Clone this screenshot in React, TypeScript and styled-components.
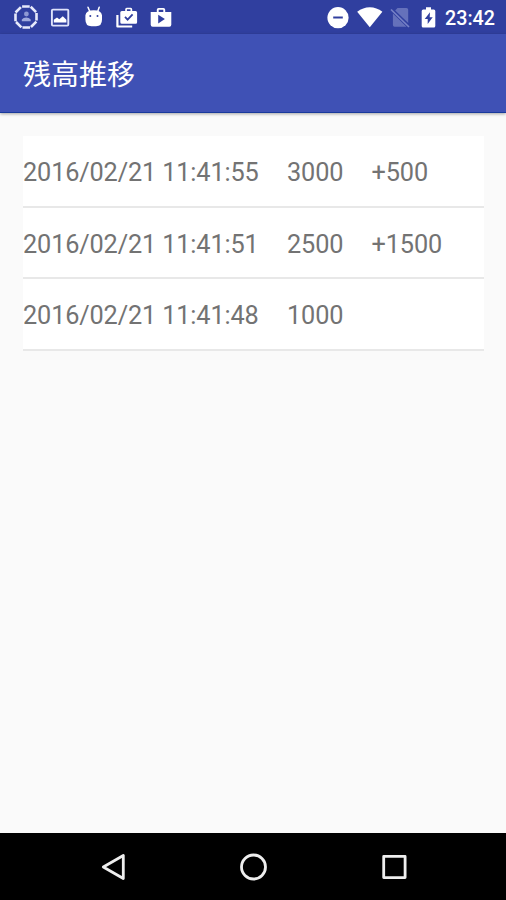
import React from 'react';
import styled, { createGlobalStyle } from 'styled-components';

const GlobalStyle = createGlobalStyle`
  * { box-sizing: border-box; }
  html, body { margin: 0; padding: 0; }
  body { background: #fafafa; font-family: Roboto, "Noto Sans CJK JP", sans-serif; }
`;

const Screen = styled.div`
  display: flex;
  flex-direction: column;
  width: 506px;
  height: 900px;
  overflow: hidden;
  background: #fafafa;
`;

const StatusBar = styled.header`
  display: flex;
  justify-content: space-between;
  align-items: center;
  flex: 0 0 34px;
  padding: 0 10px 0 14px;
  background: #303f9f;
`;

const IconGroup = styled.div<{ $gap: number }>`
  display: flex;
  align-items: center;
  gap: ${({ $gap }) => $gap}px;
`;

const StatusIcon = styled.svg<{ $width?: number }>`
  display: block;
  width: ${({ $width = 24 }) => $width}px;
  height: 24px;
  fill: #fff;
`;

const Clock = styled.time`
  width: 51px;
  margin-left: 3px;
  padding-top: 3px;
  color: #fff;
  font-size: 19.7px;
  font-weight: 500;
  line-height: 24px;
  white-space: nowrap;
`;

const AppBar = styled.div`
  display: flex;
  align-items: center;
  flex: 0 0 79px;
  padding: 0 23px 1px;
  background: #3f51b5;
  border-bottom: 1px solid #193a9c;
  box-shadow: 0 1px 3px rgba(0, 0, 0, 0.35);
  z-index: 1;
`;

const Title = styled.h1`
  margin: 0;
  color: #fff;
  font-family: "Noto Sans CJK JP", sans-serif;
  font-size: 28px;
  font-weight: 400;
  line-height: 40px;
`;

const Content = styled.main`
  flex: 1;
  padding: 23px 22px 0 23px;
`;

const History = styled.ul`
  margin: 0;
  padding: 0;
  list-style: none;
`;

const Row = styled.li`
  display: grid;
  grid-template-columns: 264px 84.5px 1fr;
  align-items: center;
  height: 71.7px;
  background: #fff;
  border-bottom: 2px solid #e8e8e8;
  color: #737373;
  font-size: 25.3px;
  line-height: 30px;
  white-space: nowrap;
`;

const Cell = styled.span<{ $tracking?: number }>`
  padding-top: 4px;
  letter-spacing: ${({ $tracking = -0.1 }) => $tracking}px;
`;

const NavigationBar = styled.nav`
  display: flex;
  justify-content: center;
  align-items: center;
  gap: 108.5px;
  flex: 0 0 67px;
  background: #000;
`;

const NavButton = styled.button`
  display: block;
  width: 32px;
  height: 32px;
  padding: 0;
  border: 0;
  background: none;

  svg {
    display: block;
    fill: none;
    stroke: #eee;
    stroke-width: 2.8;
    stroke-linejoin: round;
  }
`;

const entries = [
  { date: '2016/02/21 11:41:55', balance: '3000', change: '+500' },
  { date: '2016/02/21 11:41:51', balance: '2500', change: '+1500' },
  { date: '2016/02/21 11:41:48', balance: '1000', change: '' },
];

const Notifications = () => (
  <IconGroup $gap={9.75}>
    <StatusIcon viewBox="0 0 24 24">
      <path d="M7.5 1.5h9l6 6v9l-6 6h-9l-6-6v-9z" fill="none" stroke="#e6e9fb" strokeWidth="2.6" strokeLinejoin="round" strokeDasharray="7.6 1.1" strokeDashoffset="-0.6" />
      <circle cx="12.4" cy="9" r="2.4" fill="#8e99d3" />
      <path d="M7.8 16.3v-1.7q1.6-2 4.4-2t4.5 2v1.7z" fill="#a0aadd" />
    </StatusIcon>
    <StatusIcon viewBox="0 0 24 24">
      <rect x="3.9" y="4.6" width="16.4" height="16" rx="1" fill="none" stroke="#dfe3fb" strokeWidth="1.9" />
      <path d="M5.8 17.6v-2.8l3.2-2.2 2.3 1.7 3.5-3 3.6 3.5v2.8z" />
    </StatusIcon>
    <StatusIcon viewBox="0 0 24 24">
      <path d="m6 2.3 1.8 4.2M17.2 2.3l-1.5 4.2" stroke="#fff" strokeWidth="1.5" strokeLinecap="round" />
      <path fillRule="evenodd" d="M3.4 10.3Q4.2 5.3 11.7 5.3t8.3 5v4.2q0 6.8-6 6.8H9.4q-6 0-6-6.8zM8.3 10a1 1 0 1 0 0 2 1 1 0 0 0 0-2m7.2 0a1 1 0 1 0 0 2 1 1 0 0 0 0-2" />
    </StatusIcon>
    <StatusIcon viewBox="0 0 24 24">
      <path d="M2.4 10v11.5h14.8" fill="none" stroke="#fff" strokeWidth="2.2" strokeLinejoin="round" />
      <path fillRule="evenodd" d="M5.3 7.5Q5.3 6 6.8 6h3.4V4.2q0-1.5 1.5-1.5h4q1.5 0 1.5 1.5V6h3.4q1.5 0 1.5 1.5v9.7q0 1.5-1.5 1.5H6.8q-1.5 0-1.5-1.5zM11.9 4.3V6h3.6V4.3z" />
      <path d="m10 11.8 2.6 2.8 5-5.3" fill="none" stroke="#303f9f" strokeWidth="1.8" />
    </StatusIcon>
    <StatusIcon viewBox="0 0 24 24">
      <path fillRule="evenodd" d="M1.7 7H7.8V4.8q0-1.8 1.8-1.8h4.8q1.8 0 1.8 1.8V7h6.1v12.8q0 2-2 2H3.7q-2 0-2-2zm8-2.2V7h4.6V4.8zM9.2 9.8v8.8l6.7-4.5z" />
    </StatusIcon>
  </IconGroup>
);

const SystemStatus = () => (
  <IconGroup $gap={0}>
    <StatusIcon viewBox="0 0 32 24" $width={32}>
      <circle cx="16" cy="12.7" r="10.6" />
      <path d="M11.2 12.5h9.6" stroke="#303f9f" strokeWidth="2" />
    </StatusIcon>
    <StatusIcon viewBox="0 0 32 24" $width={32}>
      <path d="M3.2 6.8Q9 2.2 15.8 2.2T28.4 6.8L15.8 22.3z" />
    </StatusIcon>
    <StatusIcon viewBox="0 0 28 24" $width={28}>
      <path d="M11.5 3H20.5q1.7 0 1.7 1.7v13.2L9.2 5.5zM6.9 8.4l13.6 13.3H8.6q-1.7 0-1.7-1.7z" fill="#6571bb" />
      <path d="m5 4.5 18 17.5" stroke="#7782c7" strokeWidth="1.7" />
    </StatusIcon>
    <StatusIcon viewBox="0 0 28 24" $width={28}>
      <path fillRule="evenodd" d="M12 2.3h5v2.2h2.8q1.5 0 1.5 1.5v15q0 1.5-1.5 1.5H9.2q-1.5 0-1.5-1.5V6q0-1.5 1.5-1.5H12zM16 7.3l-5.3 6.8h3v5l5-6.8h-3z" />
    </StatusIcon>
    <Clock>23:42</Clock>
  </IconGroup>
);

export default function App() {
  return (
    <Screen>
      <GlobalStyle />
      <StatusBar>
        <Notifications />
        <SystemStatus />
      </StatusBar>
      <AppBar>
        <Title>残高推移</Title>
      </AppBar>
      <Content>
        <History>
          {entries.map((entry) => (
            <Row key={entry.date}>
              <Cell $tracking={-0.15}>{entry.date}</Cell>
              <Cell>{entry.balance}</Cell>
              <Cell>{entry.change}</Cell>
            </Row>
          ))}
        </History>
      </Content>
      <NavigationBar>
        <NavButton aria-label="Back">
          <svg width="32" height="32" viewBox="0 0 32 32">
            <path d="M26.3 4.5v23L6.3 16z" />
          </svg>
        </NavButton>
        <NavButton aria-label="Home">
          <svg width="32" height="32" viewBox="0 0 32 32">
            <circle cx="16.5" cy="16" r="12" />
          </svg>
        </NavButton>
        <NavButton aria-label="Recent apps">
          <svg width="32" height="32" viewBox="0 0 32 32">
            <rect x="5.7" y="5.4" width="21.4" height="21.2" />
          </svg>
        </NavButton>
      </NavigationBar>
    </Screen>
  );
}
